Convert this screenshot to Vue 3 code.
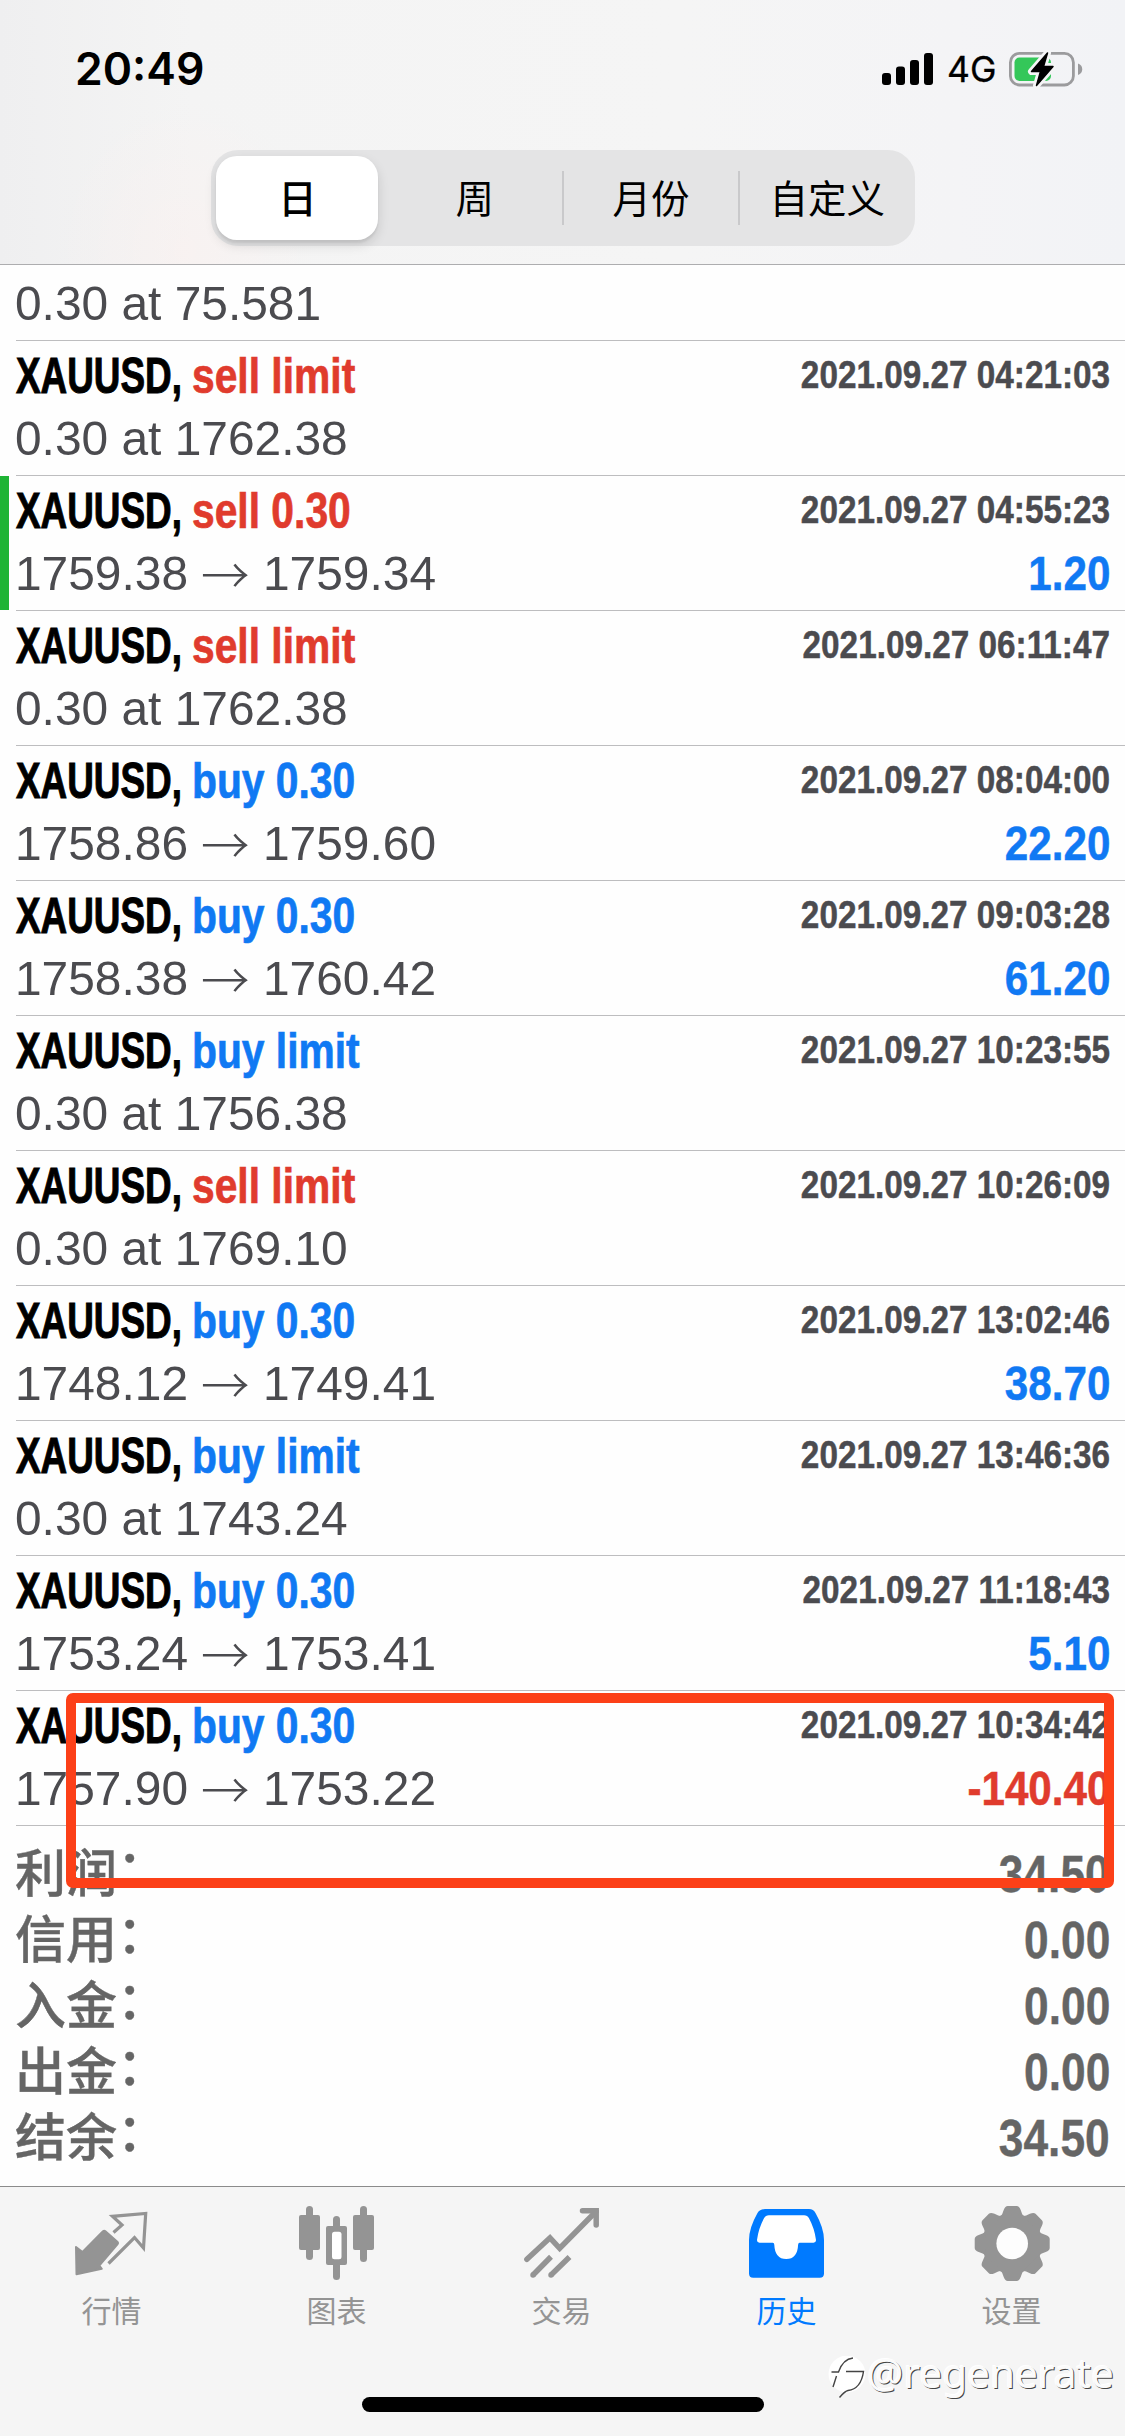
<script setup>
const segments = ['日', '周', '月份', '自定义']

const deals = [
  { side: 'sell', label: 'sell limit', time: '2021.09.27 04:21:03', order: '0.30 at 1762.38' },
  { side: 'sell', label: 'sell 0.30', time: '2021.09.27 04:55:23', from: '1759.38', to: '1759.34', profit: '1.20', marked: true },
  { side: 'sell', label: 'sell limit', time: '2021.09.27 06:11:47', order: '0.30 at 1762.38' },
  { side: 'buy', label: 'buy 0.30', time: '2021.09.27 08:04:00', from: '1758.86', to: '1759.60', profit: '22.20' },
  { side: 'buy', label: 'buy 0.30', time: '2021.09.27 09:03:28', from: '1758.38', to: '1760.42', profit: '61.20' },
  { side: 'buy', label: 'buy limit', time: '2021.09.27 10:23:55', order: '0.30 at 1756.38' },
  { side: 'sell', label: 'sell limit', time: '2021.09.27 10:26:09', order: '0.30 at 1769.10' },
  { side: 'buy', label: 'buy 0.30', time: '2021.09.27 13:02:46', from: '1748.12', to: '1749.41', profit: '38.70' },
  { side: 'buy', label: 'buy limit', time: '2021.09.27 13:46:36', order: '0.30 at 1743.24' },
  { side: 'buy', label: 'buy 0.30', time: '2021.09.27 11:18:43', from: '1753.24', to: '1753.41', profit: '5.10' },
  { side: 'buy', label: 'buy 0.30', time: '2021.09.27 10:34:42', from: '1757.90', to: '1753.22', profit: '-140.40', loss: true },
]

const totals = [
  ['利润', '34.50'],
  ['信用', '0.00'],
  ['入金', '0.00'],
  ['出金', '0.00'],
  ['结余', '34.50'],
]

const teeth = [0, 45, 90, 135, 180, 225, 270, 315]
</script>

<template>
  <div class="screen">
    <header class="header">
      <div class="status">
        <span class="clock">20:49</span>
        <div class="indicators">
          <svg class="signal" width="52" height="34" viewBox="0 0 52 34">
            <rect x="0" y="21" width="9" height="12" rx="3" />
            <rect x="14" y="14.5" width="9" height="18.5" rx="3" />
            <rect x="28" y="8" width="9" height="25" rx="3" />
            <rect x="42" y="1" width="9" height="32" rx="3" />
          </svg>
          <span class="network">4G</span>
          <svg class="battery" width="74" height="40" viewBox="0 0 74 40">
            <rect x="1.4" y="4.4" width="63" height="31.6" rx="9" fill="none" stroke="#9b9b9d" stroke-width="2.8" />
            <path d="M69 14.5c3 1 4.200 3 4.200 5.700s-1.200 4.700-4.200 5.700z" fill="#9b9b9d" />
            <rect x="5.500" y="8.500" width="36.500" height="23.500" rx="5" fill="#34c759" />
            <path d="M38.500 4L22.500 22.500h9l-4 14L44 17.500h-9.500z" fill="#000" stroke="#f5f5f6" stroke-width="7" stroke-linejoin="round" paint-order="stroke" />
            <path d="M38.500 4L22.500 22.500h9l-4 14L44 17.500h-9.500z" fill="#000" stroke="#000" stroke-width="1.500" stroke-linejoin="round" />
          </svg>
        </div>
      </div>
      <nav class="segmented">
        <div v-for="(name, i) in segments" :key="name" class="segment" :class="{ active: i === 0, divided: i > 1 }">
          <span>{{ name }}</span>
        </div>
      </nav>
    </header>

    <main class="history">
      <div class="deal cut">
        <div class="line detail"><span class="price">0.30 at 75.581</span></div>
      </div>
      <div v-for="deal in deals" :key="deal.time" class="deal" :class="{ marked: deal.marked }">
        <div class="line title">
          <span class="symbol"><b>XAUUSD,</b></span>
          <span class="side" :class="deal.side">{{ deal.label }}</span>
          <span class="time">{{ deal.time }}</span>
        </div>
        <div class="line detail">
          <span v-if="deal.order" class="price">{{ deal.order }}</span>
          <template v-else>
            <span class="price">{{ deal.from }}</span>
            <span class="arrow">→</span>
            <span class="price">{{ deal.to }}</span>
          </template>
          <span v-if="deal.profit" class="profit" :class="{ loss: deal.loss }">{{ deal.profit }}</span>
        </div>
      </div>
      <div class="totals">
        <div v-for="[name, value] in totals" :key="name" class="total">
          <span class="name">{{ name }}<i>：</i></span>
          <span class="value">{{ value }}</span>
        </div>
      </div>
      <div class="highlight"></div>
    </main>

    <footer class="tabs">
      <div class="tab">
        <svg width="75" height="75" viewBox="0 0 75 75">
          <path d="M1 41L7.500 46 28 25.200q1.200-1 2.400 0L42.600 36q1 1 0 2.200L24.300 59.600l2.500 3.200L1.500 68.200z" fill="currentColor" stroke="currentColor" stroke-width="2" stroke-linejoin="round" />
          <path d="M38.500 26.500L47 19 37.500 10.300 70.700 7.500 68.500 42 59.500 31.500 33.500 57.500" fill="none" stroke="currentColor" stroke-width="3.200" />
        </svg>
        <span>行情</span>
      </div>
      <div class="tab">
        <svg width="75" height="75" viewBox="0 0 75 75" fill="currentColor">
          <rect x="6" y="0" width="7" height="54" rx="3.500" />
          <rect x="-1" y="9" width="21" height="35" rx="2" />
          <rect x="33" y="10" width="7" height="64" rx="3.500" />
          <rect x="26" y="20" width="21" height="39" rx="2" />
          <rect x="32" y="25.700" width="9.500" height="27.500" rx="2.500" fill="#fff" />
          <rect x="60" y="0" width="7" height="56" rx="3.500" />
          <rect x="53" y="9" width="21" height="35" rx="2" />
        </svg>
        <span>图表</span>
      </div>
      <div class="tab">
        <svg width="75" height="75" viewBox="0 0 75 75" fill="none" stroke="currentColor" stroke-width="5.500">
          <path d="M1.900 53.300L25 31.800l9.700 10.500L71 5.500" stroke-linecap="round" />
          <path d="M57.500 4.800h13.700V19" stroke-linecap="round" />
          <path d="M8 69L26 50.800M26 69L44.500 51" />
          <path d="M8 69h.01M26 69h.01" stroke-linecap="round" />
        </svg>
        <span>交易</span>
      </div>
      <div class="tab selected">
        <svg width="75" height="75" viewBox="0 0 75 75">
          <path d="M15 3H59q4.500 0 6.500 4Q74 22 74 34V67.500q0 4.200-4.200 4.200H3.200Q-1 71.700-1 67.500V34Q-1 22 7.500 7 10 3 15 3z" fill="currentColor" />
          <path d="M19 9.300H54q3.500 0 5 3Q64.500 22.500 66 34q.2 2.700-2.500 2.700H49.500q-1.200 0-1.400 2Q47.500 53 36.200 53T24.300 38.700q-.2-2-1.400-2H9.500Q6.800 36.700 7 34 8.500 22.500 14 12.300q1.500-3 5-3z" fill="#fff" />
        </svg>
        <span>历史</span>
      </div>
      <div class="tab">
        <svg width="75" height="75" viewBox="0 0 75 75">
          <g transform="translate(37.200 37.500)" fill="currentColor">
            <circle r="30.200" />
            <path v-for="angle in teeth" :key="angle" :transform="`rotate(${angle})`" d="M-11.500-27Q-9.800-29-8.500-33.500-7-37.500-4.500-37.500H4.500Q7-37.500 8.500-33.500 9.800-29 11.500-27z" />
            <circle r="15.800" fill="#fdfdfd" />
          </g>
        </svg>
        <span>设置</span>
      </div>
      <div class="home"></div>
      <div class="watermark">
        <svg width="40" height="44" viewBox="0 0 40 44">
          <circle cx="20" cy="18" r="18.500" fill="#fff" />
          <path d="M4.500 16h7Q16 3 26 2M6 31L9.500 20M19 15.500h17.500Q34 33 21 34.500q-3 .5-8.500 7" fill="none" stroke="#444" stroke-width="1.400" />
        </svg>
        <span>@regenerate</span>
      </div>
    </footer>
  </div>
</template>

<style>
body {
  margin: 0;
  background: #fefefe;
}
</style>

<style scoped>
.screen {
  width: 1125px;
  height: 2436px;
  display: flex;
  flex-direction: column;
  overflow: hidden;
  background: #fefefe;
  font-family: "Liberation Sans", "Noto Sans CJK SC", sans-serif;
}
.header {
  box-sizing: border-box;
  height: 265px;
  flex: none;
  border-bottom: 1px solid #adadaf;
  background:
    radial-gradient(ellipse 130px 150px at 185px 250px, rgba(255, 238, 235, 0.35), transparent),
    linear-gradient(90deg, #efeff0 0, #f4f4f4 17%, #f5f5f5 60%, #f4f4f6 85%, #f2f3f6 100%);
}
.status {
  display: flex;
  justify-content: space-between;
  align-items: center;
  height: 150px;
  padding: 0 42px 0 75px;
  box-sizing: border-box;
}
.clock {
  font: 600 44.500px/50px "Inter", sans-serif;
  position: relative;
  top: -6px;
}
.indicators {
  display: flex;
  align-items: center;
  position: relative;
  top: -6px;
}
.network {
  width: 48px;
  margin: 2px 0 0 13px;
  font: 400 35.500px/40px "Inter", sans-serif;
  -webkit-text-stroke: 0.3px;
}
.battery {
  margin-left: 14px;
}
.segmented {
  display: flex;
  box-sizing: border-box;
  width: 704px;
  height: 96px;
  margin: 0 auto;
  border-radius: 27px;
  background: #e4e4e5;
}
.segment {
  flex: 1;
  display: flex;
  align-items: center;
  justify-content: center;
  position: relative;
  font: 400 38.500px/60px "Noto Sans CJK SC", sans-serif;
  color: #000;
}
.segment span {
  margin: -5px -2px 0 0;
}
.segment.active {
  flex: none;
  width: 162px;
  margin: 6px 8px 6px 5px;
  border-radius: 21px;
  background: #fff;
  box-shadow: 0 5px 12px rgba(0, 0, 0, 0.13), 0 3px 2px rgba(0, 0, 0, 0.06);
  font-weight: 500;
}
.divided::before {
  content: "";
  position: absolute;
  left: 0;
  top: 21px;
  width: 2px;
  height: 54px;
  background: #c9c9cb;
}
.history {
  position: relative;
  height: 1921px;
  flex: none;
}
.deal {
  position: relative;
  box-sizing: border-box;
  height: 135px;
  padding: 4px 15px 0 15px;
  background: linear-gradient(#bdbdbf, #bdbdbf) 16px 100% / 1109px 1px no-repeat;
}
.deal.cut {
  height: 76px;
  padding-top: 7px;
}
.deal.marked::before {
  content: "";
  position: absolute;
  left: 0;
  top: 0;
  width: 9px;
  height: 134px;
  background: #1fb435;
}
.line {
  display: flex;
  height: 62px;
  line-height: 62px;
  white-space: pre;
  color: #4b4b4f;
}
.title {
  font-weight: 700;
}
.symbol {
  width: 177px;
  font-size: 49.500px;
  color: #000;
}
.symbol b {
  display: inline-block;
  margin-left: 1px;
  transform: scaleX(0.745);
  transform-origin: 0 50%;
  -webkit-text-stroke: 1px;
}
.side {
  font-size: 49.500px;
  transform: scaleX(0.824);
  transform-origin: 0 50%;
  -webkit-text-stroke: 0.7px;
}
.sell,
.profit.loss {
  color: #e03b2d;
}
.buy {
  color: #1079f3;
}
.time {
  margin-left: auto;
  font-size: 39px;
  line-height: 60px;
  transform: scaleX(0.854);
  transform-origin: 100% 50%;
  -webkit-text-stroke: 0.5px;
}
.detail {
  font-size: 48.500px;
}
.detail .price {
  transform: scaleX(0.987);
  transform-origin: 0 50%;
}
.arrow {
  width: 73px;
  text-align: center;
  text-indent: -3px;
  font-family: "Noto Sans CJK SC", sans-serif;
  font-weight: 300;
}
.profit {
  margin-left: auto;
  font-weight: 700;
  color: #1079f3;
  transform: scaleX(0.87);
  transform-origin: 100% 50%;
  -webkit-text-stroke: 0.5px;
}
.totals {
  padding: 15px 15px 0 15px;
}
.total {
  display: flex;
  justify-content: space-between;
  height: 66px;
  line-height: 66px;
  color: #656565;
}
.name {
  padding-top: 1px;
  font-size: 51px;
  font-weight: 500;
  -webkit-text-stroke: 0.4px;
}
.name i {
  position: relative;
  top: -5px;
  font-style: normal;
}
.value {
  padding-top: 1px;
  font-size: 51px;
  font-weight: 700;
  transform: scaleX(0.868);
  transform-origin: 100% 50%;
  -webkit-text-stroke: 0.4px;
}
.highlight {
  position: absolute;
  left: 66px;
  top: 1428px;
  width: 1028px;
  height: 175px;
  border: 10px solid #fc4018;
  border-radius: 7px;
}
.tabs {
  position: relative;
  box-sizing: border-box;
  height: 250px;
  flex: none;
  display: flex;
  padding-top: 19px;
  border-top: 1px solid #8b8b8b;
  background: #f5f5f5;
}
.tab {
  flex: 1;
  display: flex;
  flex-direction: column;
  align-items: center;
  color: #949494;
  font: 400 30px/44px "Noto Sans CJK SC", sans-serif;
}
.tab svg {
  display: block;
  overflow: visible;
  margin-bottom: 6px;
}
.tab span {
  margin-right: 2px;
}
.tab.selected {
  color: #007aff;
}
.home {
  position: absolute;
  left: 362px;
  top: 210px;
  width: 402px;
  height: 15px;
  border-radius: 8px;
  background: #000;
}
.watermark {
  position: absolute;
  left: 827px;
  top: 169px;
  display: flex;
  align-items: flex-start;
  font: 400 40.500px/48px "Noto Sans", sans-serif;
  color: #fbfbfb;
  text-shadow: 1px 1px 0.5px #444, -1px -1px 0 #fff;
}
.watermark span {
  margin-top: -7px;
}
</style>
